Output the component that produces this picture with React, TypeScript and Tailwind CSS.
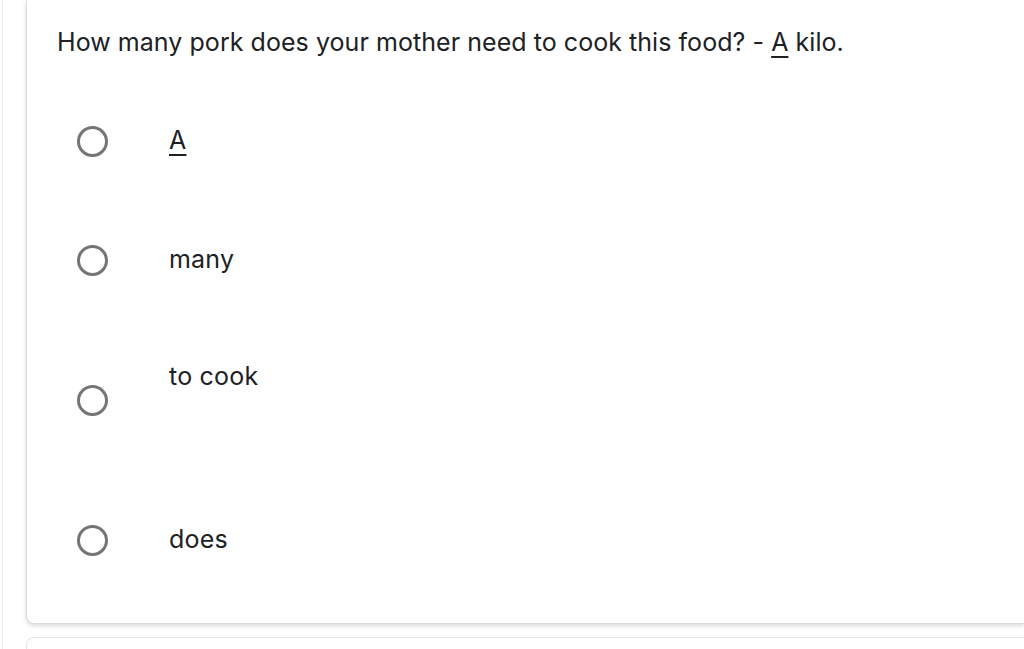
const options = [
  { label: <span className="underline underline-offset-[5px]">A</span>, extra: false },
  { label: "many", extra: false },
  { label: "to cook", extra: true },
  { label: "does", extra: false },
];

function Radio() {
  return (
    <div className="h-[31px] w-[31px] shrink-0 rounded-full border-[3px] border-[#757575]" />
  );
}

export default function App() {
  return (
    <div
      className="flex h-[649px] w-full overflow-hidden bg-white text-[#202124]"
      style={{ fontFamily: "Inter, 'Noto Sans', sans-serif" }}
    >
      <div className="ml-[2px] w-px shrink-0 bg-[#ececec]" />
      <div className="flex flex-1 flex-col gap-[13px] pl-[23px]">
        <div className="rounded-bl-lg border-b border-l border-[#dcdcdc] bg-white pb-[23px] pl-[30px] pt-[26px] shadow-[0_2px_4px_rgba(0,0,0,0.14)]">
          <p className="text-[25px] leading-[32px] tracking-[0.05px]">
            How many pork does your mother need to cook this food? -{" "}
            <span className="underline underline-offset-[5px]">A</span> kilo.
          </p>
          <div className="mt-[24px] flex flex-col">
            {options.map((o, i) => (
              <div key={i} className="flex h-auto items-center py-[44px] pl-[20px]">
                <Radio />
                <div className="ml-[61px] text-[25px] leading-[31px] tracking-[0.2px]">
                  <div className="-mt-[3px]">{o.label}</div>
                  {o.extra && <div className="h-[45px]" />}
                </div>
              </div>
            ))}
          </div>
        </div>
        <div className="h-[40px] rounded-tl-lg border-l border-t border-[#e6e6e6] bg-white" />
      </div>
    </div>
  );
}
